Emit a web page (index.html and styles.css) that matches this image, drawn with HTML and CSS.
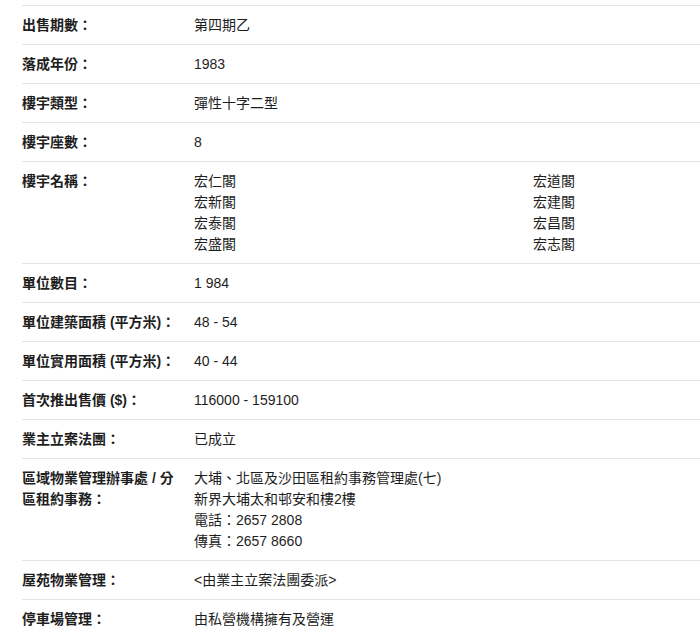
FILE: index.html
```html
<!DOCTYPE html>
<html lang="zh-Hant">
<head>
<meta charset="utf-8">
<link rel="stylesheet" href="styles.css">
</head>
<body>
<div class="info">
  <div class="row"><div class="label">出售期數：</div><div class="value">第四期乙</div></div>
  <div class="row"><div class="label">落成年份：</div><div class="value">1983</div></div>
  <div class="row"><div class="label">樓宇類型：</div><div class="value">彈性十字二型</div></div>
  <div class="row"><div class="label">樓宇座數：</div><div class="value">8</div></div>
  <div class="row"><div class="label">樓宇名稱：</div>
    <div class="value names">
      <span>宏仁閣</span><span>宏道閣</span>
      <span>宏新閣</span><span>宏建閣</span>
      <span>宏泰閣</span><span>宏昌閣</span>
      <span>宏盛閣</span><span>宏志閣</span>
    </div>
  </div>
  <div class="row"><div class="label">單位數目：</div><div class="value">1 984</div></div>
  <div class="row"><div class="label">單位建築面積 (平方米)：</div><div class="value">48 - 54</div></div>
  <div class="row"><div class="label">單位實用面積 (平方米)：</div><div class="value">40 - 44</div></div>
  <div class="row"><div class="label">首次推出售價 ($)：</div><div class="value">116000 - 159100</div></div>
  <div class="row"><div class="label">業主立案法團：</div><div class="value">已成立</div></div>
  <div class="row"><div class="label">區域物業管理辦事處 / 分區租約事務：</div>
    <div class="value">大埔、北區及沙田區租約事務管理處(七)<br>新界大埔太和邨安和樓2樓<br>電話：2657 2808<br>傳真：2657 8660</div>
  </div>
  <div class="row"><div class="label">屋苑物業管理：</div><div class="value">&lt;由業主立案法團委派&gt;</div></div>
  <div class="row"><div class="label">停車場管理：</div><div class="value">由私營機構擁有及營運</div></div>
</div>
</body>
</html>
```

FILE: styles.css
```css
html, body {
  margin: 0;
  padding: 0;
  background: #fff;
}
body {
  font-family: "Liberation Sans", "Noto Sans CJK TC", sans-serif;
  font-size: 14px;
  line-height: 21px;
  color: #1e1e1e;
  overflow: hidden;
}
.info {
  margin-left: 22px;
  padding-top: 5px;
}
.row {
  display: grid;
  grid-template-columns: 172px 1fr;
  border-top: 1px solid #e4e4e4;
  padding: 9px 0 8px;
}
.label {
  font-weight: bold;
  padding-right: 12px;
}
.names {
  display: grid;
  grid-template-columns: 339px 1fr;
}
```
